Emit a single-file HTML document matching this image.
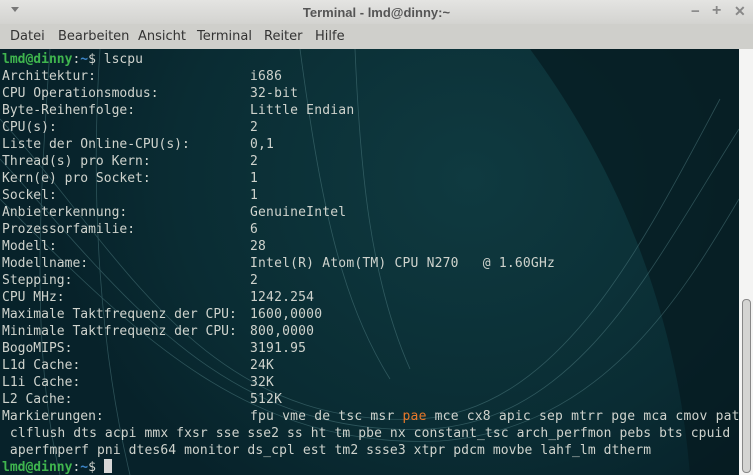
<!DOCTYPE html>
<html><head><meta charset="utf-8"><style>
html,body{margin:0;padding:0;width:753px;height:475px;overflow:hidden;background:#fff}
#title{position:absolute;left:0;top:0;width:753px;height:24px;background:linear-gradient(#e4e4e2,#d3d3d0);font:bold 13px "Liberation Sans",sans-serif;color:#555;}
#title .t{position:absolute;left:0;width:753px;top:5px;text-align:center}
#menu{position:absolute;left:0;top:24px;width:753px;height:25px;background:#cfcfcb;font:13px "DejaVu Sans","Liberation Sans",sans-serif;color:#333}
#menu span{position:absolute;top:5px}
#term{position:absolute;left:0;top:49px;width:739px;height:426px;background:radial-gradient(ellipse 420px 380px at 470px 130px,#0f3a40,#0a2c33 70%,#07222a);overflow:hidden}
#dark{position:absolute;left:0;top:0}
pre{position:absolute;margin:0;font:13px/17px "DejaVu Sans Mono",monospace;color:#cfd3cd;}
.g{color:#3fb54e;font-weight:bold}.b{color:#3d86c9;font-weight:bold}.o{color:#e8782a}
.cur{display:inline-block;width:8px;height:14px;background:#d8d8d8;vertical-align:-2px}
#sb{position:absolute;left:739px;top:49px;width:14px;height:426px;background:#f4f4f3}
#thumb{position:absolute;left:742px;top:299px;width:7px;height:172px;border:1px solid #888;border-radius:4px;background:#d4d4d2}
</style></head><body>
<div id="title"><span style="position:absolute;left:11px;top:7px;width:0;height:0;border-left:4px solid transparent;border-right:4px solid transparent;border-top:5px solid #777"></span><div class="t">Terminal - lmd@dinny:~</div>
<span style="position:absolute;left:691px;top:3px;color:#888;font-size:15px">−</span>
<span style="position:absolute;left:712px;top:2px;color:#888;font-size:16px">+</span>
<span style="position:absolute;left:734px;top:3px;color:#888;font-size:14px">✕</span></div>
<div id="menu"><span style="left:10px">Datei</span><span style="left:58px">Bearbeiten</span><span style="left:138px">Ansicht</span><span style="left:197px">Terminal</span><span style="left:264px">Reiter</span><span style="left:315px">Hilfe</span></div>
<div id="term">
<svg id="dark" width="739" height="426"><path d="M530 0 L739 0 L739 426 L690 426 C680 300 640 150 530 0Z" fill="#051a20" opacity="0.7"/>
<g fill="none" stroke="#5a8a8e" stroke-width="0.8" opacity="0.45">
<path d="M50 0 C40 150 30 300 60 426"/><path d="M100 0 C90 150 100 300 130 426"/>
<path d="M0 70 C120 200 200 380 420 370 C560 360 640 200 720 50"/>
<path d="M0 110 C120 240 220 390 430 380 C580 370 650 220 739 80"/>
<path d="M0 150 C140 290 250 400 440 392 C600 380 680 250 739 150"/>
<path d="M300 0 C320 150 340 250 390 330"/><path d="M355 0 C360 120 370 230 410 320"/>
</g></svg>
<pre style="left:2px;top:2px"><span class="g">lmd@dinny</span>:<span class="b">~</span>$ lscpu
Architektur:
CPU Operationsmodus:
Byte-Reihenfolge:
CPU(s):
Liste der Online-CPU(s):
Thread(s) pro Kern:
Kern(e) pro Socket:
Sockel:
Anbieterkennung:
Prozessorfamilie:
Modell:
Modellname:
Stepping:
CPU MHz:
Maximale Taktfrequenz der CPU:
Minimale Taktfrequenz der CPU:
BogoMIPS:
L1d Cache:
L1i Cache:
L2 Cache:
Markierungen:</pre>
<pre style="left:250px;top:19px;letter-spacing:0.2px">i686
32-bit
Little Endian
2
0,1
2
1
1
GenuineIntel
6
28
Intel(R) Atom(TM) CPU N270   @ 1.60GHz
2
1242.254
1600,0000
800,0000
3191.95
24K
32K
512K
fpu vme de tsc msr <span class="o">pae</span> mce cx8 apic sep mtrr pge mca cmov pat</pre>
<pre style="left:2px;top:376px;letter-spacing:0.09px"> clflush dts acpi mmx fxsr sse sse2 ss ht tm pbe nx constant_tsc arch_perfmon pebs bts cpuid
 aperfmperf pni dtes64 monitor ds_cpl est tm2 ssse3 xtpr pdcm movbe lahf_lm dtherm</pre>
<pre style="left:2px;top:410px"><span class="g">lmd@dinny</span>:<span class="b">~</span>$ <span class="cur"></span></pre>
</div>
<div id="sb"></div><div id="thumb"></div>
</body></html>
